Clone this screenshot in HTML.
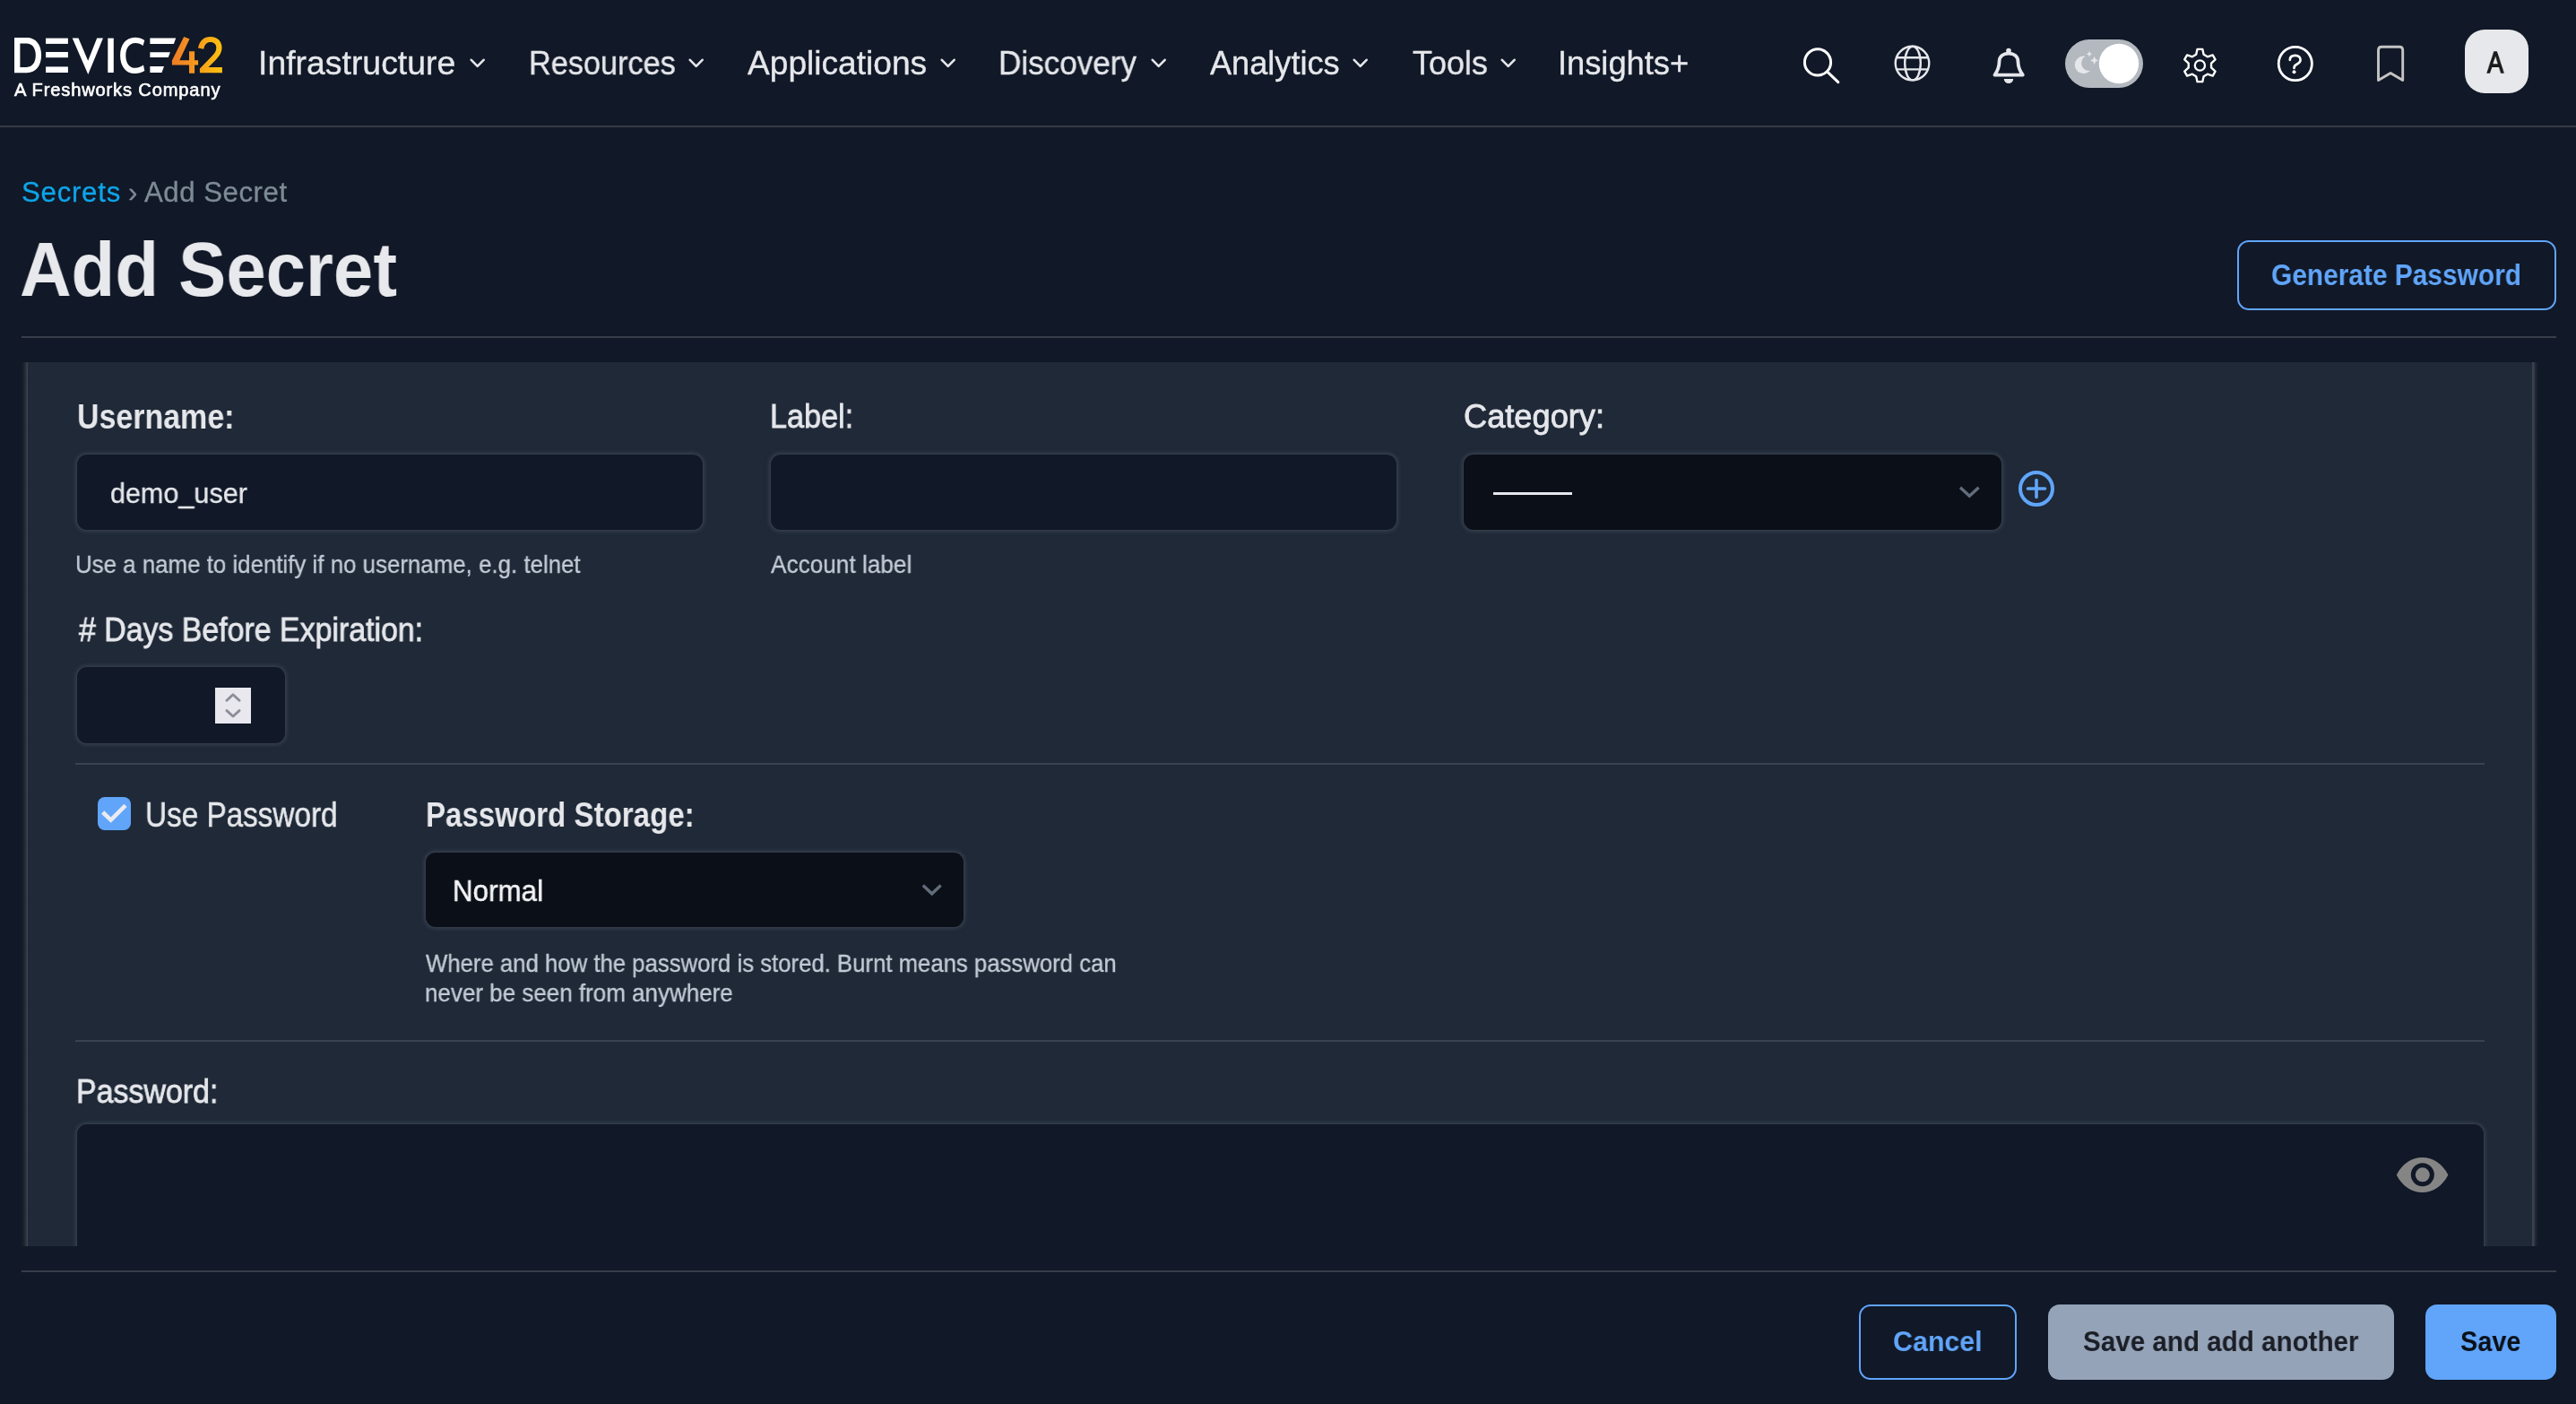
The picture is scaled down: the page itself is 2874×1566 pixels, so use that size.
<!DOCTYPE html>
<html><head><meta charset="utf-8"><title>Add Secret</title>
<style>
html,body{margin:0;padding:0;}
body{width:2874px;height:1566px;overflow:hidden;background:#111827;position:relative;font-family:"Liberation Sans",sans-serif;}
.t{position:absolute;white-space:pre;line-height:1;transform-origin:0 0;will-change:transform;}
.b{position:absolute;}
@media (max-width:2000px){body{zoom:0.5;}}
</style></head><body>
<div class="b" style="left:0px;top:140px;width:2874px;height:2px;background:#363b48;"></div>
<svg class="b" style="left:0;top:0" width="270" height="120" viewBox="0 0 270 120">
<defs><linearGradient id="lg" x1="190" y1="0" x2="248" y2="0" gradientUnits="userSpaceOnUse"><stop offset="0" stop-color="#ee7a27"/><stop offset="0.45" stop-color="#f5961f"/><stop offset="1" stop-color="#fcc10f"/></linearGradient></defs>
<g fill="#fff">
<path d="M16 42.1 H30 C40 42.1 46.1 50 46.1 61.6 C46.1 73.5 40 81.2 30 81.2 H16 Z M22.4 48.4 V74.9 H29.6 C36 74.9 39.8 70 39.8 61.6 C39.8 53.3 36 48.4 29.6 48.4 Z" fill-rule="evenodd"/>
<rect x="51.1" y="42.6" width="24.8" height="6.3"/><rect x="51.1" y="58" width="24.8" height="6.2"/><rect x="51.1" y="74.4" width="24.8" height="6.6"/>
<path d="M80.7 42.6 H87.5 L98.2 67.8 L108.2 42.6 H115 L98.3 83 Z"/>
<rect x="120.3" y="42.6" width="6.5" height="38.4"/>
<path d="M161.3 45 C158 42.8 154.5 41.8 150.5 41.8 C140.5 41.8 134.1 50 134.1 61.9 C134.1 73.8 140.5 82 150.5 82 C154.5 82 158 81 161.3 79 L160 72.6 C157.5 74.5 154.5 75.8 151 75.8 C144.5 75.8 140.3 70.5 140.3 61.9 C140.3 53.3 144.5 48 151 48 C154.5 48 157.3 49.2 159.5 51 Z"/>
<path d="M167.4 42.6 H196.2 L193.9 48.9 H167.4 Z"/><path d="M167.4 58.2 H189.9 L187.8 64 H167.4 Z"/><path d="M167.4 74.1 H183 L180.5 81 H167.4 Z"/>
</g>
<g fill="url(#lg)">
<path d="M205.2 41 L211.5 43.5 L200.3 67.3 H211 V57.2 H217.1 V67.3 H221.1 V72.6 H217.1 V81.7 H211 V72.6 H191.9 V67.6 Z"/>
<path d="M221 53.5 C222.5 45.5 227.5 41 234.8 41 C242.8 41 247.5 46.5 247.5 53 C247.5 58.5 245 62 241 66.5 L232.5 75 H247.9 V81.2 H222.9 V76.5 L237 62 C240 58.8 241.3 56.5 241.3 53.2 C241.3 49.3 238.7 47 234.8 47 C230.8 47 228.3 49.5 227.2 54.8 Z"/>
</g></svg>
<div class="t" style="left:16.00px;top:90.07px;font-size:20px;font-weight:400;color:#ffffff;letter-spacing:0.85px;transform:scaleX(1.0044);-webkit-text-stroke:0.6px #ffffff;">A Freshworks Company</div>
<div class="t" style="left:288.37px;top:52.52px;font-size:36px;font-weight:400;color:#e5e7eb;transform:scaleX(1.0385);-webkit-text-stroke:0.35px #e5e7eb;">Infrastructure</div>
<svg class="b" style="left:524px;top:64px" width="20" height="14" viewBox="0 0 20 14"><path d="M1.8 2.8 L8.7 9.8 L15.6 2.8" fill="none" stroke="#e5e7eb" stroke-width="2.6" stroke-linecap="round" stroke-linejoin="round"/></svg>
<div class="t" style="left:590.10px;top:52.52px;font-size:36px;font-weight:400;color:#e5e7eb;transform:scaleX(0.9521);-webkit-text-stroke:0.35px #e5e7eb;">Resources</div>
<svg class="b" style="left:768px;top:64px" width="20" height="14" viewBox="0 0 20 14"><path d="M1.8 2.8 L8.7 9.8 L15.6 2.8" fill="none" stroke="#e5e7eb" stroke-width="2.6" stroke-linecap="round" stroke-linejoin="round"/></svg>
<div class="t" style="left:834.00px;top:52.52px;font-size:36px;font-weight:400;color:#e5e7eb;transform:scaleX(1.0311);-webkit-text-stroke:0.35px #e5e7eb;">Applications</div>
<svg class="b" style="left:1049px;top:64px" width="20" height="14" viewBox="0 0 20 14"><path d="M1.8 2.8 L8.7 9.8 L15.6 2.8" fill="none" stroke="#e5e7eb" stroke-width="2.6" stroke-linecap="round" stroke-linejoin="round"/></svg>
<div class="t" style="left:1114.05px;top:52.52px;font-size:36px;font-weight:400;color:#e5e7eb;transform:scaleX(0.9744);-webkit-text-stroke:0.35px #e5e7eb;">Discovery</div>
<svg class="b" style="left:1284px;top:64px" width="20" height="14" viewBox="0 0 20 14"><path d="M1.8 2.8 L8.7 9.8 L15.6 2.8" fill="none" stroke="#e5e7eb" stroke-width="2.6" stroke-linecap="round" stroke-linejoin="round"/></svg>
<div class="t" style="left:1350.00px;top:52.52px;font-size:36px;font-weight:400;color:#e5e7eb;transform:scaleX(1.0043);-webkit-text-stroke:0.35px #e5e7eb;">Analytics</div>
<svg class="b" style="left:1509px;top:64px" width="20" height="14" viewBox="0 0 20 14"><path d="M1.8 2.8 L8.7 9.8 L15.6 2.8" fill="none" stroke="#e5e7eb" stroke-width="2.6" stroke-linecap="round" stroke-linejoin="round"/></svg>
<div class="t" style="left:1575.52px;top:52.52px;font-size:36px;font-weight:400;color:#e5e7eb;transform:scaleX(0.9978);-webkit-text-stroke:0.35px #e5e7eb;">Tools</div>
<svg class="b" style="left:1674px;top:64px" width="20" height="14" viewBox="0 0 20 14"><path d="M1.8 2.8 L8.7 9.8 L15.6 2.8" fill="none" stroke="#e5e7eb" stroke-width="2.6" stroke-linecap="round" stroke-linejoin="round"/></svg>
<div class="t" style="left:1737.98px;top:52.52px;font-size:36px;font-weight:400;color:#e5e7eb;transform:scaleX(1.0071);-webkit-text-stroke:0.35px #e5e7eb;">Insights+</div>
<svg class="b" style="left:2000px;top:40px" width="60" height="60" viewBox="2000 40 60 60"><circle cx="2028" cy="69.4" r="14.6" fill="none" stroke="#fff" stroke-width="3"/><path d="M2039.3 80.6 L2050.8 91.6" stroke="#fff" stroke-width="3" stroke-linecap="round"/></svg>
<svg class="b" style="left:2100px;top:40px" width="70" height="60" viewBox="2100 40 70 60"><g fill="none" stroke="#e5e7eb" stroke-width="2.4"><circle cx="2133.5" cy="70.6" r="18.8"/><ellipse cx="2134" cy="70.6" rx="8.8" ry="18.8"/><path d="M2116 64.3 H2151 M2116 77.4 H2151"/></g></svg>
<svg class="b" style="left:2215px;top:45px" width="55" height="55" viewBox="0 0 55 55"><path d="M10.5 38.6 L41.8 38.6 C37 32 36.5 28 36.5 24 C36.5 18 32 14.6 26 14.6 C20 14.6 15.5 18 15.5 24 C15.5 28 15 32 10.5 38.6 Z" fill="none" stroke="#e5e7eb" stroke-width="3.8" stroke-linejoin="round"/><circle cx="26" cy="11.5" r="2.8" fill="#e5e7eb"/><path d="M20.8 42.9 H31.2 A5.2 5.2 0 0 1 20.8 42.9 Z" fill="#e5e7eb"/></svg>
<div class="b" style="left:2304px;top:43.6px;width:87px;height:54.4px;background:#b4b8bf;border-radius:27px;"></div>
<svg class="b" style="left:2304px;top:43px" width="90" height="56" viewBox="2304 43 90 56"><circle cx="2364" cy="71" r="22.2" fill="#fff"/><circle cx="2324.6" cy="72.4" r="9.8" fill="#e5e7eb"/><circle cx="2330.9" cy="70.4" r="8.7" fill="#b4b8bf"/><path d="M2331 56.8 L2332 59.2 L2334.4 60.2 L2332 61.2 L2331 63.6 L2330 61.2 L2327.6 60.2 L2330 59.2 Z" fill="#e5e7eb"/><path d="M2336.6 62.8 L2338 66 L2341.2 67.4 L2338 68.8 L2336.6 72 L2335.2 68.8 L2332 67.4 L2335.2 66 Z" fill="#e5e7eb"/></svg>
<svg class="b" style="left:2425px;top:45px" width="60" height="60" viewBox="0 0 60 60"><path d="M25.20 15.80 L26.52 9.83 L32.28 9.83 L33.60 15.80 L37.86 18.26 L43.70 16.42 L46.58 21.41 L42.06 25.54 L42.06 30.46 L46.58 34.59 L43.70 39.58 L37.86 37.74 L33.60 40.20 L32.28 46.17 L26.52 46.17 L25.20 40.20 L20.94 37.74 L15.10 39.58 L12.22 34.59 L16.74 30.46 L16.74 25.54 L12.22 21.41 L15.10 16.42 L20.94 18.26 Z" fill="none" stroke="#fff" stroke-width="2.35" stroke-linejoin="round"/><circle cx="29.4" cy="28" r="5.6" fill="none" stroke="#fff" stroke-width="2.3"/></svg>
<svg class="b" style="left:2535px;top:45px" width="60" height="60" viewBox="0 0 60 60"><circle cx="25.8" cy="26" r="18.6" fill="none" stroke="#fff" stroke-width="2.8"/><path d="M19.8 21.8 C19.8 18.6 22.3 16.9 25.8 16.9 C29.4 16.9 31.6 19 31.6 21.8 C31.6 24.6 29 26 27 27 C25 28 24.5 29.2 24.5 31" fill="none" stroke="#fff" stroke-width="2.7" stroke-linecap="round"/><circle cx="24.5" cy="35.2" r="2" fill="#fff"/></svg>
<svg class="b" style="left:2535px;top:45px" width="160" height="60" viewBox="0 0 160 60"><path d="M118.5 44.6 V11 Q118.5 7.3 122.2 7.3 H142 Q145.7 7.3 145.7 11 V44.6 L132.1 36.6 Z" fill="none" stroke="#c4c4c4" stroke-width="2.9" stroke-linejoin="round"/></svg>
<div class="b" style="left:2750px;top:32.6px;width:71px;height:71.4px;background:#e7e8eb;border-radius:22px;"></div>
<div class="t" style="left:2775.16px;top:52.01px;font-size:34px;font-weight:400;color:#1a1a1a;transform:scaleX(0.8000);-webkit-text-stroke:1.3px #1a1a1a;">A</div>
<div class="t" style="left:24.01px;top:198.75px;font-size:31px;font-weight:400;color:#0ea5e9;letter-spacing:0.75px;transform:scaleX(1.0057);-webkit-text-stroke:0.3px #0ea5e9;">Secrets</div>
<div class="t" style="left:143.00px;top:198.75px;font-size:31px;font-weight:400;color:#7d8b96;-webkit-text-stroke:0.3px #7d8b96;">›</div>
<div class="t" style="left:161.00px;top:198.75px;font-size:31px;font-weight:400;color:#7d8b96;letter-spacing:0.5px;transform:scaleX(1.0077);-webkit-text-stroke:0.3px #7d8b96;">Add Secret</div>
<div class="t" style="left:22.15px;top:257.18px;font-size:86px;font-weight:700;color:#e8e9ec;transform:scaleX(0.9270);">Add Secret</div>
<div class="b" style="left:2496px;top:268px;width:356px;height:78px;border:2.5px solid #60a5fa;border-radius:13px;box-sizing:border-box;"></div>
<div class="t" style="left:2534.12px;top:290.06px;font-size:33px;font-weight:700;color:#60a5fa;transform:scaleX(0.9052);">Generate Password</div>
<div class="b" style="left:24px;top:375px;width:2828px;height:2px;background:#383d4a;"></div>
<div class="b" style="left:22px;top:404px;width:2812px;height:986px;background:linear-gradient(to right,#111827 0px,#141b29 3px,#2a313d 7px,#3b424e 8px,#3b424e 9px,#1f2937 9px,#1f2937 2803px,#3b424e 2803px,#3b424e 2805px,#262c39 2806px,#151b29 2809px,#111827 2811px);"></div>
<div class="t" style="left:86.24px;top:445.53px;font-size:38px;font-weight:700;color:#e5e7eb;transform:scaleX(0.8933);">Username:</div>
<div class="t" style="left:858.60px;top:446.82px;font-size:36px;font-weight:400;color:#e5e7eb;transform:scaleX(0.9507);-webkit-text-stroke:0.8px #e5e7eb;">Label:</div>
<div class="t" style="left:1632.51px;top:446.82px;font-size:36px;font-weight:400;color:#e5e7eb;transform:scaleX(1.0060);-webkit-text-stroke:0.8px #e5e7eb;">Category:</div>
<div class="b" style="left:86px;top:507px;width:698px;height:84px;background:#111827;border-radius:11px;box-shadow:0 0 0 1px #333b48, 0 0 4px 2px rgba(62,72,88,0.7);"></div>
<div class="b" style="left:860px;top:507px;width:698px;height:84px;background:#111827;border-radius:11px;box-shadow:0 0 0 1px #333b48, 0 0 4px 2px rgba(62,72,88,0.7);"></div>
<div class="b" style="left:1633px;top:507px;width:600px;height:84px;background:#0b0f17;border-radius:11px;box-shadow:0 0 0 1px #333b48, 0 0 4px 2px rgba(62,72,88,0.7);"></div>
<div class="t" style="left:123.05px;top:533.91px;font-size:32px;font-weight:400;color:#e5e7eb;transform:scaleX(0.9548);-webkit-text-stroke:0.3px #e5e7eb;">demo_user</div>
<div class="b" style="left:1666px;top:548.5px;width:88px;height:3.0px;background:#e5e7eb;"></div>
<svg class="b" style="left:2180px;top:535px" width="36" height="26" viewBox="2180 535 36 26"><path d="M2187 543.8 L2197.3 553.2 L2207.6 543.8" fill="none" stroke="#626d7b" stroke-width="3.4"/></svg>
<svg class="b" style="left:2245px;top:520px" width="54" height="54" viewBox="2245 520 54 54"><g fill="none" stroke="#60a5fa" stroke-width="4"><circle cx="2272" cy="545" r="18"/><path d="M2272 535.5 V554.5 M2262.5 545 H2281.5" stroke-width="3.6" stroke-linecap="round"/></g></svg>
<div class="t" style="left:84.15px;top:615.79px;font-size:28px;font-weight:400;color:#c2cad5;transform:scaleX(0.9238);-webkit-text-stroke:0.35px #c2cad5;">Use a name to identify if no username, e.g. telnet</div>
<div class="t" style="left:860.00px;top:615.79px;font-size:28px;font-weight:400;color:#c2cad5;transform:scaleX(0.9354);-webkit-text-stroke:0.35px #c2cad5;">Account label</div>
<div class="t" style="left:87.94px;top:684.72px;font-size:36px;font-weight:400;color:#e5e7eb;transform:scaleX(0.9408);-webkit-text-stroke:0.8px #e5e7eb;"># Days Before Expiration:</div>
<div class="b" style="left:86px;top:744px;width:232px;height:85px;background:#111827;border-radius:11px;box-shadow:0 0 0 1px #333b48, 0 0 4px 2px rgba(62,72,88,0.7);"></div>
<div class="b" style="left:240px;top:767px;width:40px;height:40px;background:#e8e8ee;"></div>
<svg class="b" style="left:240px;top:767px" width="40" height="40" viewBox="0 0 40 40"><path d="M13 14.2 L20 7.8 L27 14.2 M13 25.6 L20 32 L27 25.6" fill="none" stroke="#8e8e99" stroke-width="2.9" stroke-linecap="round" stroke-linejoin="round"/></svg>
<div class="b" style="left:84px;top:851px;width:2688px;height:2px;background:#3a4250;"></div>
<div class="b" style="left:109px;top:889px;width:37px;height:37px;background:#60a5fa;border-radius:8px;"></div>
<svg class="b" style="left:95px;top:875px" width="65" height="65" viewBox="95 875 65 65"><path d="M114.7 906 L123.7 914.6 L140 898.4" fill="none" stroke="#ebebef" stroke-width="4.6" stroke-linecap="butt" stroke-linejoin="miter"/></svg>
<div class="t" style="left:161.78px;top:890.43px;font-size:38px;font-weight:400;color:#e5e7eb;transform:scaleX(0.8760);-webkit-text-stroke:0.5px #e5e7eb;">Use Password</div>
<div class="t" style="left:474.79px;top:889.63px;font-size:38px;font-weight:700;color:#e5e7eb;transform:scaleX(0.8707);">Password Storage:</div>
<div class="b" style="left:475px;top:951px;width:600px;height:83px;background:#0b0f17;border-radius:11px;box-shadow:0 0 0 1px #333b48, 0 0 4px 2px rgba(62,72,88,0.7);"></div>
<div class="t" style="left:505.18px;top:975.61px;font-size:34px;font-weight:400;color:#f3f4f6;transform:scaleX(0.9228);-webkit-text-stroke:0.5px #f3f4f6;">Normal</div>
<svg class="b" style="left:1020px;top:980px" width="36" height="26" viewBox="1020 980 36 26"><path d="M1029.8 987.5 L1039.7 996.8 L1049.6 987.5" fill="none" stroke="#626d7b" stroke-width="3.4"/></svg>
<div class="t" style="left:475.00px;top:1060.59px;font-size:28px;font-weight:400;color:#c2cad5;transform:scaleX(0.9187);-webkit-text-stroke:0.35px #c2cad5;">Where and how the password is stored. Burnt means password can</div>
<div class="t" style="left:474.07px;top:1093.59px;font-size:28px;font-weight:400;color:#c2cad5;transform:scaleX(0.9280);-webkit-text-stroke:0.35px #c2cad5;">never be seen from anywhere</div>
<div class="b" style="left:84px;top:1160px;width:2688px;height:2px;background:#3a4250;"></div>
<div class="t" style="left:85.10px;top:1199.52px;font-size:36px;font-weight:400;color:#e5e7eb;transform:scaleX(0.9425);-webkit-text-stroke:0.8px #e5e7eb;">Password:</div>
<div class="b" style="left:86px;top:1254px;width:2685px;height:166px;background:#111827;border-radius:11px;box-shadow:0 0 0 1px #333b48, 0 0 4px 2px rgba(62,72,88,0.7);"></div>
<svg class="b" style="left:2670px;top:1285px" width="64" height="52" viewBox="2670 1285 64 52"><path d="M2673.8 1310.5 C2680 1298 2691 1291 2702.6 1291 C2714 1291 2725 1298 2731.4 1310.5 C2725 1323 2714 1330 2702.6 1330 C2691 1330 2680 1323 2673.8 1310.5 Z" fill="#858585"/><circle cx="2702.8" cy="1310.3" r="13" fill="#111827"/><circle cx="2702.8" cy="1310.3" r="8" fill="#858585"/></svg>
<div class="b" style="left:0px;top:1390px;width:2874px;height:176px;background:#111827;"></div>
<div class="b" style="left:24px;top:1417px;width:2828px;height:2px;background:#383d4a;"></div>
<div class="b" style="left:2074px;top:1455px;width:176px;height:84px;border:2.5px solid #60a5fa;border-radius:13px;box-sizing:border-box;"></div>
<div class="t" style="left:2112.02px;top:1481.25px;font-size:31px;font-weight:700;color:#60a5fa;transform:scaleX(0.9798);">Cancel</div>
<div class="b" style="left:2285px;top:1455px;width:386px;height:84px;background:#94a3b8;border-radius:13px;"></div>
<div class="t" style="left:2324.05px;top:1481.25px;font-size:31px;font-weight:700;color:#1b1e26;transform:scaleX(0.9545);">Save and add another</div>
<div class="b" style="left:2706px;top:1455px;width:146px;height:84px;background:#60a5fa;border-radius:13px;"></div>
<div class="t" style="left:2745.08px;top:1481.25px;font-size:31px;font-weight:700;color:#0b0f17;transform:scaleX(0.9299);">Save</div>
</body></html>
